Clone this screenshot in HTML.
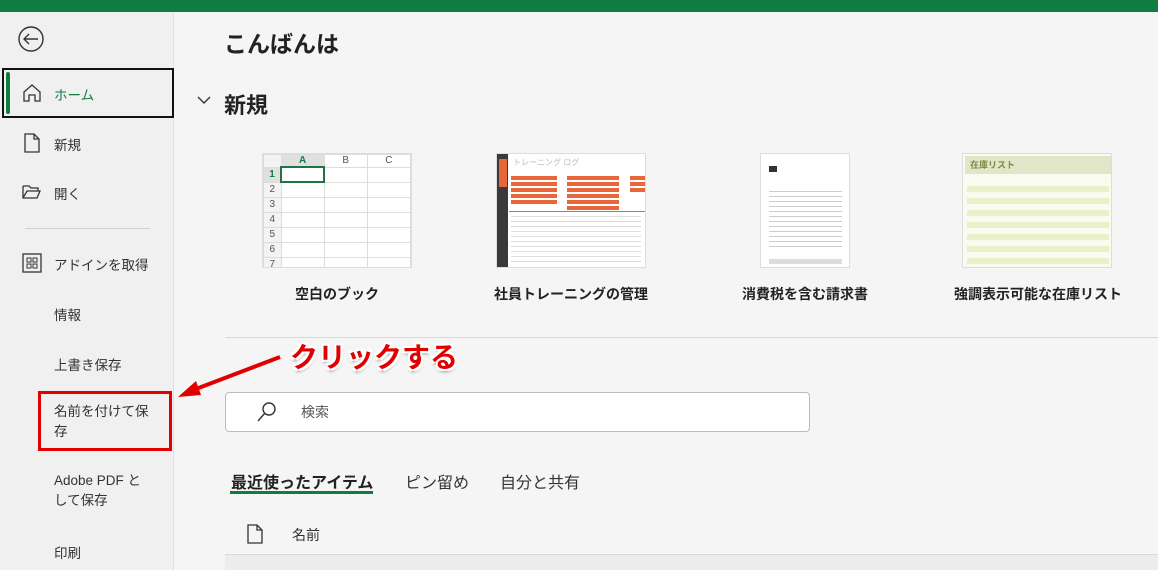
<!DOCTYPE html><html><head><meta charset="utf-8"><style>
*{margin:0;padding:0;box-sizing:border-box}
body{width:1158px;height:570px;overflow:hidden;background:#f5f5f5;font-family:"Liberation Sans","Noto Sans CJK JP",sans-serif;color:#262626;position:relative}
.a{position:absolute}
.top{left:0;top:0;width:1158px;height:12px;background:#107c41}
.side{left:0;top:12px;width:174px;height:558px;background:#f0f0f0;border-right:1px solid #e1e1e1}
.nav{font-size:13.5px;color:#333}
.lbl{font-size:14px;font-weight:bold;color:#222;text-align:center;width:240px}
.grid td{border:1px solid #ddd;height:15px;width:48px;background:#fff}
</style></head><body>
<div class="a top"></div>
<div class="a side"></div>
<svg class="a" style="left:16px;top:26px" width="30" height="28"><circle cx="15" cy="13" r="12" fill="none" stroke="#333" stroke-width="1.4"/><path d="M22 13H8M13 8l-5 5 5 5" fill="none" stroke="#333" stroke-width="1.4"/></svg>
<div class="a" style="left:2px;top:68px;width:172px;height:50px;border:2px solid #111"></div>
<div class="a" style="left:6px;top:72px;width:4px;height:42px;background:#107c41;border-radius:2px"></div>
<svg class="a" style="left:22px;top:83px" width="20" height="20"><path d="M2 9L10 2l8 7v9h-5v-6h-6v6H2z" fill="none" stroke="#333" stroke-width="1.3"/></svg>
<div class="a nav" style="left:54px;top:84px;color:#107c41">ホーム</div>
<svg class="a" style="left:24px;top:133px" width="16" height="20"><path d="M1 1h9l5 5v13H1z M10 1v5h5" fill="none" stroke="#333" stroke-width="1.3"/></svg>
<div class="a nav" style="left:54px;top:134px">新規</div>
<svg class="a" style="left:22px;top:184px" width="20" height="16"><path d="M1 2h6l2 2h7v3 M1 2v12h14l3-7H5l-4 7" fill="none" stroke="#333" stroke-width="1.3"/></svg>
<div class="a nav" style="left:54px;top:183px">開く</div>
<div class="a" style="left:25px;top:228px;width:125px;height:1px;background:#d0d0d0"></div>
<svg class="a" style="left:22px;top:253px" width="20" height="20"><rect x="1" y="1" width="18" height="18" fill="none" stroke="#333" stroke-width="1.3"/><rect x="5" y="5" width="4" height="4" fill="none" stroke="#333"/><rect x="11" y="5" width="4" height="4" fill="none" stroke="#333"/><rect x="5" y="11" width="4" height="4" fill="none" stroke="#333"/><rect x="11" y="11" width="4" height="4" fill="none" stroke="#333"/></svg>
<div class="a nav" style="left:54px;top:254px">アドインを取得</div>
<div class="a nav" style="left:54px;top:304px">情報</div>
<div class="a nav" style="left:54px;top:354px">上書き保存</div>
<div class="a" style="left:38px;top:391px;width:134px;height:60px;border:3px solid #e00000"></div>
<div class="a nav" style="left:54px;top:402px;line-height:20px;width:106px">名前を付けて保存</div>
<div class="a nav" style="left:54px;top:471px;line-height:20px;width:98px">Adobe PDF として保存</div>
<div class="a nav" style="left:54px;top:542px">印刷</div>

<div class="a" style="left:224px;top:25px;font-size:23px;font-weight:bold;color:#222">こんばんは</div>
<svg class="a" style="left:197px;top:95px" width="14" height="10"><path d="M1 2l6 6 6-6" fill="none" stroke="#333" stroke-width="1.4"/></svg>
<div class="a" style="left:224px;top:88px;font-size:22px;font-weight:bold;color:#222">新規</div>

<div class="a" style="left:262px;top:153px;width:150px;height:115px;background:#fff;border:1px solid #ddd;overflow:hidden">
<table class="grid" style="border-collapse:collapse;font-size:10px;color:#555;text-align:center">
<tr><td style="width:19px;background:#f3f3f3;height:12px"></td><td style="background:#e0e0e0;color:#107c41;font-weight:bold;height:12px">A</td><td style="height:12px">B</td><td style="height:12px">C</td></tr>
<tr><td style="width:19px;background:#e0e0e0;color:#107c41;font-weight:bold">1</td><td style="border:2px solid #217346"></td><td></td><td></td></tr>
<tr><td style="width:19px;background:#f3f3f3">2</td><td></td><td></td><td></td></tr>
<tr><td style="width:19px;background:#f3f3f3">3</td><td></td><td></td><td></td></tr>
<tr><td style="width:19px;background:#f3f3f3">4</td><td></td><td></td><td></td></tr>
<tr><td style="width:19px;background:#f3f3f3">5</td><td></td><td></td><td></td></tr>
<tr><td style="width:19px;background:#f3f3f3">6</td><td></td><td></td><td></td></tr>
<tr><td style="width:19px;background:#f3f3f3">7</td><td></td><td></td><td></td></tr>
</table></div>
<div class="a" style="left:496px;top:153px;width:150px;height:115px;background:#fff;border:1px solid #ddd;overflow:hidden">
<div class="a" style="left:0;top:0;width:11px;height:115px;background:#3a3a3a"></div>
<div class="a" style="left:2px;top:5px;width:8px;height:28px;background:#e8663a"></div>
<div class="a" style="left:16px;top:3px;font-size:8px;color:#bbb">トレーニング ログ</div>
<div class="a" style="left:14px;top:22px;width:46px;height:30px;background:repeating-linear-gradient(#e8663a 0 4px,#fff 4px 6px)"></div>
<div class="a" style="left:70px;top:22px;width:52px;height:34px;background:repeating-linear-gradient(#e8663a 0 4px,#fff 4px 6px)"></div>
<div class="a" style="left:133px;top:22px;width:16px;height:18px;background:repeating-linear-gradient(#e8663a 0 4px,#fff 4px 6px)"></div>
<div class="a" style="left:12px;top:57px;width:138px;height:1px;background:#e8663a"></div>
<div class="a" style="left:14px;top:60px;width:130px;height:52px;background:repeating-linear-gradient(#fff 0 2px,#ddd 2px 3px,#fff 3px 5px)"></div>
</div>
<div class="a" style="left:760px;top:153px;width:90px;height:115px;background:#fff;border:1px solid #ddd;overflow:hidden">
<div class="a" style="left:8px;top:12px;width:8px;height:6px;background:#333"></div>
<div class="a" style="left:8px;top:37px;width:73px;height:60px;background:repeating-linear-gradient(#ccc 0 1px,#fff 1px 5px)"></div>
<div class="a" style="left:8px;top:105px;width:73px;height:5px;background:#ddd"></div>
</div>
<div class="a" style="left:962px;top:153px;width:150px;height:115px;background:#fafaf0;border:1px solid #ddd;overflow:hidden">
<div class="a" style="left:2px;top:2px;width:146px;height:18px;background:#e2e6c8"></div>
<div class="a" style="left:7px;top:4px;font-size:9px;color:#7a8a40;font-weight:bold">在庫リスト</div>
<div class="a" style="left:4px;top:32px;width:142px;height:80px;background:repeating-linear-gradient(#eaf0c8 0 6px,#fafaf0 6px 12px)"></div>
</div>
<div class="a lbl" style="left:217px;top:284px">空白のブック</div>
<div class="a lbl" style="left:451px;top:284px">社員トレーニングの管理</div>
<div class="a lbl" style="left:685px;top:284px">消費税を含む請求書</div>
<div class="a lbl" style="left:918px;top:284px">強調表示可能な在庫リスト</div>

<div class="a" style="left:225px;top:337px;width:933px;height:1px;background:#d8d8d8"></div>
<div class="a" style="left:290px;top:336px;font-size:28px;font-weight:bold;color:#e00000;text-shadow:-2px -2px 0 #fff,2px -2px 0 #fff,-2px 2px 0 #fff,2px 2px 0 #fff,0 3px 3px #999">クリックする</div>
<svg class="a" style="left:170px;top:350px" width="120" height="60"><path d="M110 7L18 42" stroke="#e00000" stroke-width="4"/><path d="M8 47l18-16 5 14z" fill="#e00000"/></svg>

<div class="a" style="left:225px;top:392px;width:585px;height:40px;background:#fff;border:1px solid #bbb;border-radius:4px"></div>
<svg class="a" style="left:256px;top:401px" width="22" height="22"><circle cx="13" cy="8" r="6" fill="none" stroke="#333" stroke-width="1.4"/><path d="M9 12l-7 8" stroke="#333" stroke-width="1.4"/></svg>
<div class="a" style="left:301px;top:402px;font-size:14px;color:#555">検索</div>
<div class="a" style="left:231px;top:469px;font-size:16px;font-weight:bold;color:#222">最近使ったアイテム</div>
<div class="a" style="left:230px;top:491px;width:143px;height:3px;background:#107c41"></div>
<div class="a" style="left:405px;top:469px;font-size:16px;color:#333">ピン留め</div>
<div class="a" style="left:500px;top:469px;font-size:16px;color:#333">自分と共有</div>
<svg class="a" style="left:247px;top:524px" width="16" height="20"><path d="M1 1h9l5 5v13H1z M10 1v5h5" fill="none" stroke="#333" stroke-width="1.3"/></svg>
<div class="a" style="left:292px;top:525px;font-size:14px;color:#333">名前</div>
<div class="a" style="left:225px;top:554px;width:933px;height:1px;background:#d8d8d8"></div>
<div class="a" style="left:225px;top:555px;width:933px;height:15px;background:#ececec"></div>
</body></html>
